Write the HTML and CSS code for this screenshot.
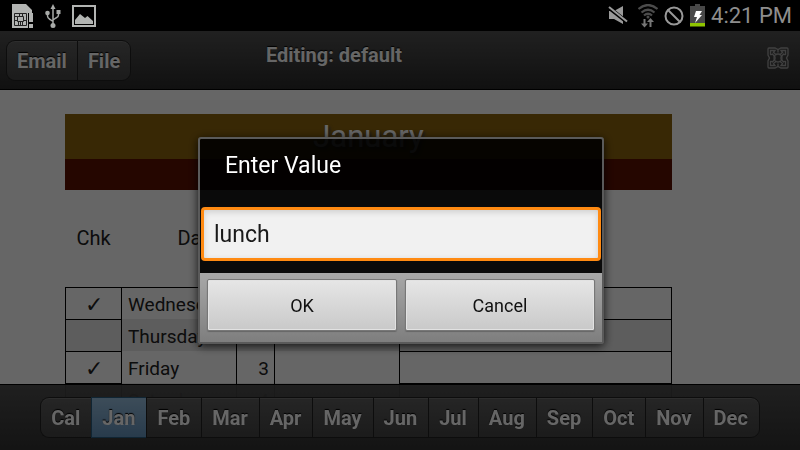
FILE: index.html
```html
<!DOCTYPE html>
<html lang="en">

<head>
  <meta charset="UTF-8">
  <meta name="viewport" content="width=device-width, initial-scale=1.0">
  <title>Editing: default</title>
  <link rel="stylesheet" href="styles.css">
</head>

<body>
  <!-- status bar -->
  <div class="status">
    <div class="status-left">
      <svg class="sim" width="22" height="26" viewBox="0 0 22 26">
        <path d="M0 1h14l6 6v3h-4v15H0z" fill="#b2b4b2" />
        <path d="M2.500 10.500h12v12h-12z M5.500 13.500h6v5h-6z M2.500 13.500h3M2.500 17.500h3M11.500 17.500h3M7.500 10.500v3M10.500 10.500v3M6.500 18.500v4M8.500 18.500v4M10.500 18.500v4" fill="none" stroke="#222" />
        <path d="M17 10h4v9h-4z M17 21h4v4h-4z" fill="#b2b4b2" />
      </svg>
      <svg class="usb" width="16" height="26" viewBox="0 0 16 26">
        <path d="M8 4v19M2.500 10v3q0 2 2.500 3.500l3 2M13.500 9v3q0 2-2.500 3l-3 2" fill="none" stroke="#a8aaa8" stroke-width="1.500" />
        <path d="M8 1l2.500 5h-5z" fill="#a8aaa8" />
        <circle cx="2.500" cy="10" r="2.300" fill="#a8aaa8" />
        <path d="M11.500 7h4v4h-4z" fill="#a8aaa8" />
        <circle cx="8" cy="22.500" r="2.500" fill="#a8aaa8" />
      </svg>
      <svg class="pic" width="24" height="22" viewBox="0 0 24 22">
        <path d="M1 1h22v20H1z" fill="none" stroke="#b2b4b2" stroke-width="2" />
        <path d="M3 15l5-6 5 4 2.500-2 5.500 5v3H3z" fill="#b2b4b2" />
      </svg>
    </div>
    <div class="status-right">
      <svg class="mute" width="20" height="20" viewBox="0 0 20 20">
        <path d="M1 5h5l9-5v18l-9-5H1z" fill="#9a9a9a" />
        <path d="M0 1l19 15" stroke="#000" stroke-width="4" />
        <path d="M1 1l18 14.500" stroke="#9a9a9a" stroke-width="2" />
      </svg>
      <svg class="wifi" width="20" height="24" viewBox="0 0 20 24">
        <path d="M.5 5q9.500-8 19 0M3.500 8.500q6.500-5.500 13 0M6 11.500q4-3.500 8 0" fill="none" stroke="#4b4b4b" stroke-width="2.200" />
        <circle cx="10" cy="13" r="1.500" fill="#4b4b4b" />
        <path d="M6.500 15v6M12.500 23v-6" stroke="#777" stroke-width="2" />
        <path d="M3 19.500h7l-3.500 4z M9 18h7l-3.500-4z" fill="#777" />
      </svg>
      <svg class="block" width="20" height="20" viewBox="0 0 20 20">
        <path d="M3.500 3.500l13 13" stroke="#999" stroke-width="2" />
        <circle cx="10" cy="10" r="8.500" fill="none" stroke="#999" stroke-width="2" />
      </svg>
      <svg class="battery" width="15" height="23" viewBox="0 0 15 23">
        <path d="M5 0h5v2h5v17H0V2h5z" fill="#484848" />
        <path d="M0 19h15v3.500H0z" fill="#8fc400" />
        <path d="M6 7h6l-2.500 4H12l-7 8 2-6H4z" fill="#fff" />
      </svg>
      <span class="time">4:21 PM</span>
    </div>
  </div>

  <!-- top toolbar -->
  <header class="toolbar">
    <div class="group">
      <button type="button">Email</button>
      <button type="button">File</button>
    </div>
    <h1>Editing: default</h1>
    <button type="button" class="expand" aria-label="Full screen">
      <svg width="22" height="22" viewBox="0 0 22 22">
        <g fill="none" stroke="#a0a0a0" stroke-width="1.300">
          <path d="M1 20V14l1.500-3L1 8V2q0-1 1-1h6l3 1.500L14 1h6q1 0 1 1v6l-1.500 3 1.500 3v6q0 1-1 1h-6l-3-1.500L8 21H2q-1 0-1-1z" />
          <path d="M3.500 8V3.500H8L6.500 5.500l3 2.500M18.500 8V3.500H14l1.500 2-3 2.500M3.500 14v4.500H8l-1.500-2 3-2.500M18.500 14v4.500H14l1.500-2-3-2.500" />
          <path d="M3.500 8l2-1 2.500 3v2l-2.500 3-2-1M18.500 8l-2-1-2.500 3v2l2.500 3 2-1M11 2.500v3M11 16.500v3" />
          <circle cx="11" cy="11" r="4" />
        </g>
      </svg>
    </button>
  </header>

  <!-- sheet -->
  <main class="sheet">
    <div class="banner">
      <h2>January</h2>
    </div>
    <table>
      <colgroup>
        <col class="c-chk">
        <col class="c-day">
        <col class="c-num">
        <col class="c-time">
        <col>
      </colgroup>
      <thead>
        <tr>
          <th>Chk</th>
          <th colspan="2">Date</th>
          <th></th>
          <th></th>
        </tr>
      </thead>
      <tbody>
        <tr>
          <td class="chk">✓</td>
          <td class="day">Wednesday</td>
          <td class="num">1</td>
          <td></td>
          <td class="note"></td>
        </tr>
        <tr>
          <td class="chk"></td>
          <td class="day">Thursday</td>
          <td class="num">2</td>
          <td></td>
          <td class="note"></td>
        </tr>
        <tr>
          <td class="chk">✓</td>
          <td class="day">Friday</td>
          <td class="num">3</td>
          <td></td>
          <td class="note"></td>
        </tr>
        <tr>
          <td class="chk"></td>
          <td class="day">Saturday</td>
          <td class="num">4</td>
          <td></td>
          <td class="note"></td>
        </tr>
      </tbody>
    </table>
  </main>

  <!-- sheet tabs -->
  <footer class="tabs">
    <div class="group">
      <button type="button">Cal</button>
      <button type="button" class="active">Jan</button>
      <button type="button">Feb</button>
      <button type="button">Mar</button>
      <button type="button">Apr</button>
      <button type="button">May</button>
      <button type="button">Jun</button>
      <button type="button">Jul</button>
      <button type="button">Aug</button>
      <button type="button">Sep</button>
      <button type="button">Oct</button>
      <button type="button">Nov</button>
      <button type="button">Dec</button>
    </div>
  </footer>

  <!-- dialog -->
  <div class="overlay">
    <form class="dialog">
      <label for="value">Enter Value</label>
      <div class="field">
        <input type="text" id="value" value="lunch">
      </div>
      <div class="actions">
        <button type="button">OK</button>
        <button type="button">Cancel</button>
      </div>
    </form>
  </div>
</body>

</html>
```
FILE: styles.css
```css
* {
  margin: 0;
  padding: 0;
  box-sizing: border-box;
}

body {
  height: 100vh;
  overflow: hidden;
  background-color: #fff;
  font-family: Roboto, "Noto Sans", sans-serif;
  color: #222;
}

button,
input {
  font-family: inherit;
}

/* status bar */
.status {
  display: flex;
  justify-content: space-between;
  height: 31px;
  padding: 0 8px 0 12px;
  background-color: #000;
}

.status-left,
.status-right {
  display: flex;
  align-items: center;
}

.status-left {
  gap: 11px;
}

.status-right {
  gap: 6px;
}

.wifi {
  margin-left: 4px;
}

.time {
  font-size: 22px;
  line-height: 31px;
  color: #8e8e8e;
}

/* toolbars */
.toolbar {
  display: flex;
  justify-content: space-between;
  height: 59px;
  padding: 9px 11px 0 6px;
  border-bottom: 1px solid #000;
  background: linear-gradient(#525252, #2a2a2a);
}

.toolbar h1 {
  position: absolute;
  left: 0;
  width: 100%;
  padding-right: 132px;
  font-size: 20px;
  line-height: 30px;
}

.toolbar h1,
.group button {
  text-align: center;
  font-weight: bold;
  color: #fff;
  text-shadow: 0 -1px 1px #000;
}

.group {
  display: flex;
  height: 41px;
}

.group button {
  padding: 0 10px;
  border: 1px solid #222;
  border-right: 0;
  background: linear-gradient(#5e5e5e, #454545);
  font-size: 20px;
  box-shadow: inset 0 1px 0 #707070;
}

.group button:first-child {
  border-radius: 9px 0 0 9px;
}

.group button:last-child {
  border-right: 1px solid #222;
  border-radius: 0 9px 9px 0;
}

.group .active {
  border-color: #2a5c80;
  background: linear-gradient(#98bfdf, #6594bd);
  box-shadow: none;
}

.expand {
  align-self: flex-start;
  margin-top: 7px;
  border: 0;
  background: none;
}

.expand svg {
  display: block;
}

/* sheet */
.sheet {
  margin: 24px 128px 0 65px;
}

.banner {
  height: 76px;
  border-bottom: 31px solid #5c0f02;
  background-color: #8c640d;
}

.banner h2 {
  font-size: 31px;
  line-height: 45px;
  font-weight: normal;
  text-align: center;
  color: #fff;
  text-shadow: 2px 2px 3px #444;
}

table {
  width: 100%;
  table-layout: fixed;
  border-collapse: collapse;
}

.c-chk {
  width: 56px;
}

.c-day {
  width: 115px;
}

.c-num {
  width: 38px;
}

.c-time {
  width: 125px;
}

th {
  height: 97px;
  font-size: 20px;
  font-weight: normal;
}

tbody tr:first-child {
  border-top: 1px solid #000;
}

tbody tr:nth-child(even) {
  background-color: #e8e8e8;
}

td {
  height: 32px;
  padding-top: 3px;
  border-right: 1px solid #000;
  border-left: 1px solid #000;
  font-size: 19px;
  line-height: 24px;
}

.chk,
.note {
  border-bottom: 1px solid #000;
}

.chk {
  font-size: 22px;
  text-align: center;
}

.day {
  padding-left: 6px;
}

.num {
  padding-right: 5px;
  text-align: right;
}

/* sheet tabs */
.tabs {
  position: fixed;
  bottom: 0;
  width: 100%;
  height: 66px;
  padding-top: 12px;
  border-top: 1px solid #000;
  background: linear-gradient(rgba(72, 72, 72, .96), rgba(42, 42, 42, .96));
}

.tabs .group {
  justify-content: center;
}

.tabs button {
  padding: 0 11px 0 10px;
}

/* dialog */
.overlay {
  position: fixed;
  top: 31px;
  bottom: 0;
  width: 100%;
  display: flex;
  justify-content: center;
  align-items: center;
  padding-left: 2px;
  background-color: rgba(0, 0, 0, .6);
}

.dialog {
  width: 406px;
  border: 2px solid #5a5a5a;
  border-radius: 3px;
  background-color: rgba(0, 0, 0, .9);
  background-clip: padding-box;
  box-shadow: 0 2px 10px rgba(0, 0, 0, .8);
}

.dialog label {
  display: block;
  padding: 0 25px 14px;
  font-size: 23px;
  line-height: 54px;
  color: #fff;
}

.field {
  padding: 0 1px 12px;
}

.field input {
  display: block;
  width: 100%;
  height: 54px;
  padding: 0 10px;
  border: 3px solid #ff8a12;
  border-radius: 4px;
  outline: 0;
  background-color: #f1f1f1;
  font-size: 23px;
  color: #1a1a1a;
  box-shadow: inset 0 2px 6px rgba(0, 0, 0, .15);
}

.actions {
  display: flex;
  gap: 8px;
  padding: 6px 7px 11px;
  background: linear-gradient(#a8a8a8, #7e7e7e);
}

.actions button {
  flex: 1;
  height: 52px;
  border: 1px solid #777;
  border-radius: 2px;
  background: linear-gradient(#e6e6e6, #c9c9c9);
  font-size: 18px;
  color: #111;
  box-shadow: inset 0 0 0 1px #e2e2e2, 0 1px 1px #666;
}
```
